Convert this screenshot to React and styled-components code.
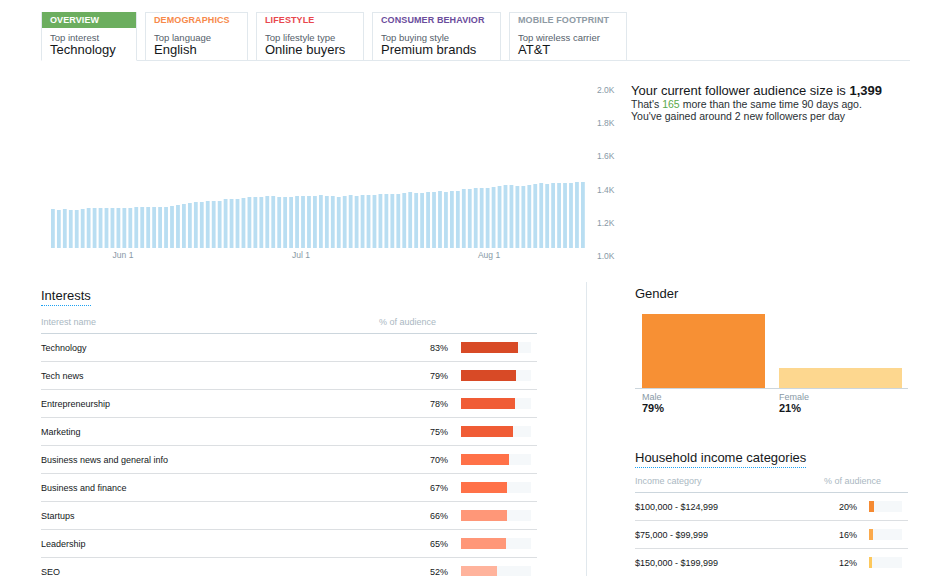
import React from "react";
import styled, { createGlobalStyle } from "styled-components";

const Global = createGlobalStyle`
  html, body { margin: 0; padding: 0; background: #fff; }
  body { font-family: "Liberation Sans", Arial, sans-serif; color: #14171a; }
  * { box-sizing: border-box; }
`;

const Page = styled.div`
  width: 930px;
  height: 576px;
  overflow: hidden;
  padding: 12px 20px 0 41px;
`;

const TabsRow = styled.div`
  display: flex;
  gap: 8px;
  border-bottom: 1px solid #e1e8ed;
  height: 49px;
`;

const Tab = styled.div`
  width: ${(p) => p.$w}px;
  height: ${(p) => (p.$active ? 49 : 48)}px;
  border: 1px solid #e1e8ed;
  border-top: ${(p) => (p.$active ? "none" : "1px solid #e1e8ed")};
  border-bottom: ${(p) => (p.$active ? "1px solid #fff" : "none")};
  background: #fff;
  display: flex;
  flex-direction: column;
`;

const TabHead = styled.div`
  height: ${(p) => (p.$active ? 16 : 15)}px;
  background: ${(p) => (p.$active ? "#6cae5f" : "#fff")};
  color: ${(p) => (p.$active ? "#fff" : p.$color)};
  font-size: 9px;
  font-weight: bold;
  line-height: ${(p) => (p.$active ? 16 : 15)}px;
  padding: 0 8px;
  letter-spacing: 0.1px;
  text-transform: uppercase;
`;

const TabLabel = styled.div`
  margin-top: 4px;
  padding: 0 8px;
  font-size: 9.5px;
  line-height: 11px;
  color: #55606a;
`;

const TabValue = styled.div`
  padding: 0 8px;
  font-size: 13px;
  line-height: 13px;
  color: #14171a;
`;

const ChartSection = styled.div`
  display: flex;
  margin-top: 18px;
  height: 203px;
`;

const ChartSvg = styled.svg`
  display: block;
  flex: none;
`;

const Summary = styled.div`
  margin-left: 10px;
  padding-top: 4px;
`;

const SummaryTitle = styled.div`
  font-size: 13px;
  line-height: 15px;
  color: #14171a;
  b { font-weight: bold; }
`;

const SummaryLine = styled.div`
  font-size: 10.5px;
  line-height: 12px;
  color: #292f33;
  span { color: #5aa84a; }
`;

const Bottom = styled.div`
  display: flex;
`;

const LeftCol = styled.div`
  width: 546px;
  border-right: 1px solid #e1e8ed;
  padding-top: 4px;
  height: 300px;
`;

const RightCol = styled.div`
  width: 273px;
  margin-left: 48px;
  padding-top: 2px;
`;

const Title = styled.div`
  display: inline-block;
  font-size: 13px;
  line-height: 14px;
  color: #14171a;
  padding-bottom: 2px;
  border-bottom: ${(p) => (p.$dotted ? "1px dotted #1da1f2" : "none")};
`;

const Table = styled.div`
  width: ${(p) => p.$w}px;
  margin-top: ${(p) => p.$mt}px;
`;

const HeadRow = styled.div`
  display: grid;
  grid-template-columns: ${(p) => p.$cols};
  height: 17px;
  font-size: 9px;
  color: #aab8c2;
  border-bottom: 1px solid #ccd6dd;
  align-items: start;
`;

const Row = styled.div`
  display: grid;
  grid-template-columns: ${(p) => p.$cols};
  height: 28px;
  align-items: center;
  font-size: 9px;
  color: #14171a;
  border-bottom: 1px solid #dcdfe2;
`;

const Pct = styled.div`
  text-align: right;
  padding-right: ${(p) => p.$pr}px;
`;

const Track = styled.div`
  width: ${(p) => p.$w}px;
  height: 11px;
  background: #f5f8fa;
  display: flex;
`;

const Fill = styled.div`
  height: 100%;
  background: ${(p) => p.$color};
`;

const GenderChart = styled.div`
  margin-top: 11px;
  height: 75px;
  border-bottom: 1px solid #ccd6dd;
  display: flex;
  align-items: flex-end;
  gap: 14px;
  padding-left: 7px;
`;

const GenderBar = styled.div`
  width: 123px;
  height: ${(p) => p.$h}px;
  background: ${(p) => p.$color};
`;

const GenderLabels = styled.div`
  display: flex;
  gap: 14px;
  padding-left: 7px;
  margin-top: 3px;
`;

const GenderLabel = styled.div`
  width: 123px;
  font-size: 9px;
  line-height: 10px;
  color: #8899a6;
  b {
    display: block;
    font-size: 11px;
    line-height: 12px;
    color: #14171a;
  }
`;

const IncomeBlock = styled.div`
  margin-top: 34px;
`;

const tabs = [
  { name: "Overview", label: "Top interest", value: "Technology", w: 96, active: true },
  { name: "Demographics", label: "Top language", value: "English", w: 103, color: "#f7894a" },
  { name: "Lifestyle", label: "Top lifestyle type", value: "Online buyers", w: 108, color: "#e8474e" },
  { name: "Consumer behavior", label: "Top buying style", value: "Premium brands", w: 129, color: "#6a4c9c" },
  { name: "Mobile footprint", label: "Top wireless carrier", value: "AT&T", w: 118, color: "#8e9aa4" },
];

const heights = [
  39, 38, 39, 38, 38, 39, 40, 40, 40, 40, 40, 40, 40, 40, 41, 41, 41, 41, 41, 41, 42, 43, 44, 45, 46, 46, 47, 47, 47,
  49,
  49, 49, 50, 51, 51, 51, 52, 52, 51, 51, 51, 52, 52, 52, 52, 53, 52, 52, 51, 52, 53, 52, 53, 53, 53, 54, 54, 54,
  54,
  55, 56, 55, 55, 56, 56, 57, 56, 57, 57, 59, 59, 60, 60, 60, 61, 62, 63, 63, 62, 62, 63, 64, 65, 64, 65, 65, 65, 65, 66, 66,
];

const interests = [
  ["Technology", 83, "#d84a26"],
  ["Tech news", 79, "#d84a26"],
  ["Entrepreneurship", 78, "#f05c35"],
  ["Marketing", 75, "#f05c35"],
  ["Business news and general info", 70, "#ff7148"],
  ["Business and finance", 67, "#ff7148"],
  ["Startups", 66, "#ff9778"],
  ["Leadership", 65, "#ff9778"],
  ["SEO", 52, "#ffb39c"],
];

const incomes = [
  ["$100,000 - $124,999", 20, "#f58a32"],
  ["$75,000 - $99,999", 16, "#fba94b"],
  ["$150,000 - $199,999", 12, "#fdc85c"],
];

function FollowerChart() {
  const x0 = 10;
  const pitch = 530 / 89;
  const base = 169;
  const yLabels = ["2.0K", "1.8K", "1.6K", "1.4K", "1.2K", "1.0K"];
  return (
    <ChartSvg width="580" height="203" viewBox="0 0 580 203">
      {heights.map((h, i) => (
        <rect key={i} x={x0 + i * pitch} y={base - h} width="3.8" height={h} fill="#b9def2" />
      ))}
      {[["Jun 1", 82], ["Jul 1", 260], ["Aug 1", 448]].map(([t, x]) => (
        <text key={t} x={x} y="179" fontSize="8.5" fill="#8899a6" textAnchor="middle" fontFamily="Liberation Sans, Arial, sans-serif">
          {t}
        </text>
      ))}
      {yLabels.map((t, i) => (
        <text key={t} x="556" y={14 + i * 33.2} fontSize="8.5" fill="#8899a6" fontFamily="Liberation Sans, Arial, sans-serif">
          {t}
        </text>
      ))}
    </ChartSvg>
  );
}

export default function App() {
  const iCols = "338px 82px 76px";
  const hCols = "185px 37px 51px";
  return (
    <Page>
      <Global />
      <TabsRow>
        {tabs.map((t) => (
          <Tab key={t.name} $w={t.w} $active={t.active}>
            <TabHead $active={t.active} $color={t.color}>{t.name}</TabHead>
            <TabLabel>{t.label}</TabLabel>
            <TabValue>{t.value}</TabValue>
          </Tab>
        ))}
      </TabsRow>

      <ChartSection>
        <FollowerChart />
        <Summary>
          <SummaryTitle>
            Your current follower audience size is <b>1,399</b>
          </SummaryTitle>
          <SummaryLine>
            That's <span>165</span> more than the same time 90 days ago.
          </SummaryLine>
          <SummaryLine>You've gained around 2 new followers per day</SummaryLine>
        </Summary>
      </ChartSection>

      <Bottom>
        <LeftCol>
          <Title $dotted>Interests</Title>
          <Table $w={496} $mt={11}>
            <HeadRow $cols="338px 158px">
              <div>Interest name</div>
              <div>% of audience</div>
            </HeadRow>
            {interests.map(([name, pct, color]) => (
              <Row key={name} $cols={iCols}>
                <div>{name}</div>
                <Pct $pr={13}>{pct}%</Pct>
                <Track $w={70}>
                  <Fill $color={color} style={{ width: `${pct * 0.69}px` }} />
                </Track>
              </Row>
            ))}
          </Table>
        </LeftCol>

        <RightCol>
          <Title>Gender</Title>
          <GenderChart>
            <GenderBar $h={74} $color="#f79034" />
            <GenderBar $h={20} $color="#fdd78f" />
          </GenderChart>
          <GenderLabels>
            <GenderLabel>
              Male<b>79%</b>
            </GenderLabel>
            <GenderLabel>
              Female<b>21%</b>
            </GenderLabel>
          </GenderLabels>

          <IncomeBlock>
            <Title $dotted>Household income categories</Title>
            <Table $w={273} $mt={8}>
              <HeadRow $cols="189px 84px">
                <div>Income category</div>
                <div>% of audience</div>
              </HeadRow>
              {incomes.map(([name, pct, color]) => (
                <Row key={name} $cols={hCols}>
                  <div>{name}</div>
                  <Pct $pr={0}>{pct}%</Pct>
                  <Track $w={33} style={{ marginLeft: 12 }}>
                    <Fill $color={color} style={{ width: `${Math.round(pct * 0.27)}px` }} />
                  </Track>
                </Row>
              ))}
            </Table>
          </IncomeBlock>
        </RightCol>
      </Bottom>
    </Page>
  );
}
